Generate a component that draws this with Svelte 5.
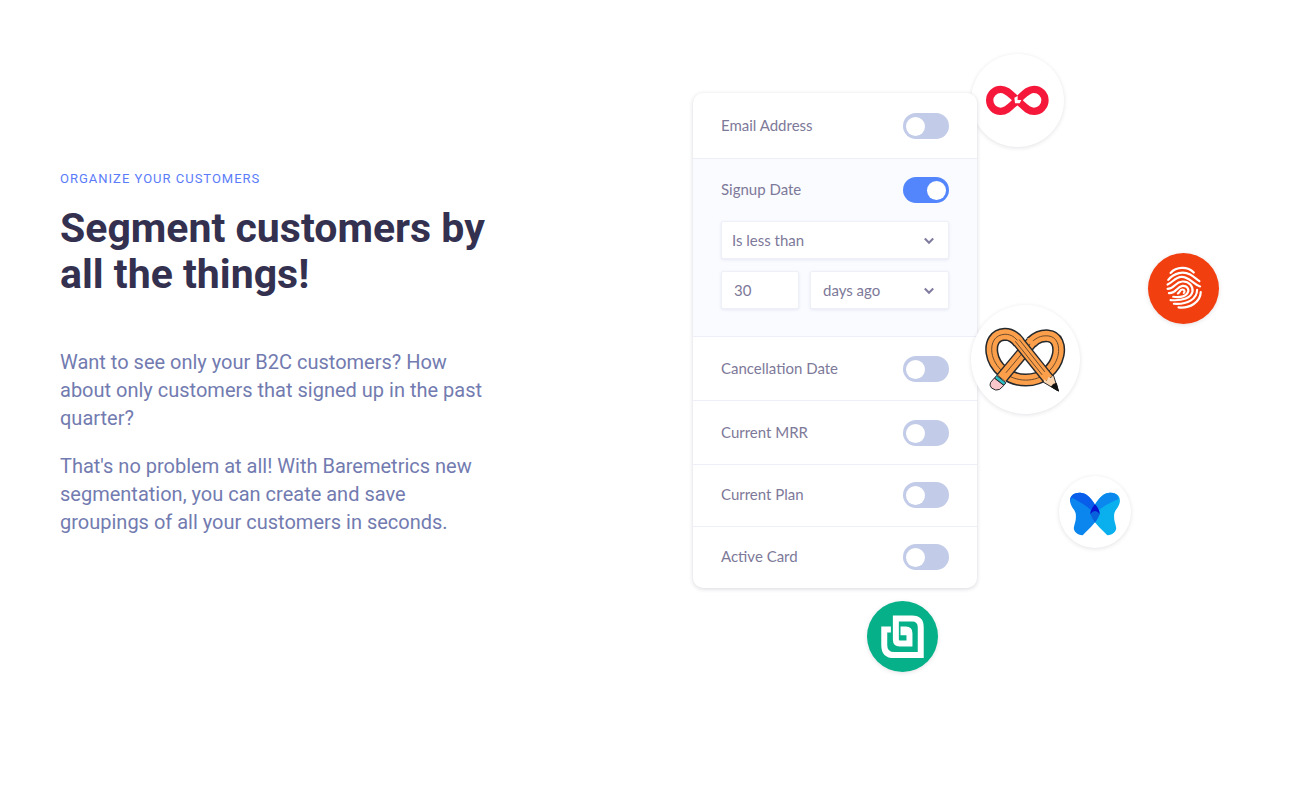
<script>
  let filters = $state([
    { id: 'email', label: 'Email Address', on: false, size: 'first' },
    { id: 'signup', label: 'Signup Date', on: true, size: 'open' },
    { id: 'cancel', label: 'Cancellation Date', on: false, size: 'regular' },
    { id: 'mrr', label: 'Current MRR', on: false, size: 'regular' },
    { id: 'plan', label: 'Current Plan', on: false, size: 'compact' },
    { id: 'card', label: 'Active Card', on: false, size: 'compact' }
  ]);
  let amount = $state('30');

  const loop =
    'M214 143C235 123 250 122 265 123C292 125 301 153 295 181C286 222 248 256 198 256C144 256 102 216 96 174C92 144 104 120 135 118C154 118 166 127 178 143';
</script>

{#snippet chevron()}
  <svg class="chevron" viewBox="0 0 12 8" aria-hidden="true">
    <path d="M1.8 1.6 6 5.8l4.2-4.2" fill="none" stroke="#807da0" stroke-width="2.1" />
  </svg>
{/snippet}

<section class="feature">
  <div class="copy">
    <p class="eyebrow">Organize your customers</p>
    <h2>Segment customers by all the things!</h2>
    <p>Want to see only your B2C customers? How about only customers that signed up in the past quarter?</p>
    <p>That's no problem at all! With Baremetrics new segmentation, you can create and save groupings of all your customers in seconds.</p>
  </div>

  <div class="art">
    <div class="logo infinity">
      <svg viewBox="34 41 279 279" aria-hidden="true">
        <path d="M173 180C153 197 143 213 123 213A33 33 0 0 1 123 147C143 147 153 163 173 180C193 197 203 213 223 213A33 33 0 0 0 223 147C203 147 193 163 173 180Z" fill="none" stroke="#f5183a" stroke-width="22" />
        <path d="M164 172l10-5v12h11l-5 10h-14z" fill="#fff" />
      </svg>
    </div>

    <form class="card">
      {#each filters as f (f.id)}
        <div class="row {f.size}">
          <div class="line">
            <label for={f.id}>{f.label}</label>
            <input class="toggle" type="checkbox" id={f.id} bind:checked={f.on} />
          </div>
          {#if f.size === 'open'}
            <div class="fields">
              <div class="picker wide">
                <select aria-label="Comparison">
                  <option>Is less than</option>
                </select>
                {@render chevron()}
              </div>
              <input class="amount" type="text" aria-label="Amount" bind:value={amount} />
              <div class="picker">
                <select aria-label="Unit">
                  <option>days ago</option>
                </select>
                {@render chevron()}
              </div>
            </div>
          {/if}
        </div>
      {/each}
    </form>

    <div class="logo fingerprint">
      <svg viewBox="39 38 214 214" aria-hidden="true">
        <g fill="none" stroke="#fff" stroke-width="6.5" stroke-linecap="round">
          <path d="M107 98C124 79 158 77 177 97" />
          <path d="M100 119C119 97 145 92 166 103C177 109 185 117 194 123" />
          <path d="M98 133C114 126 121 111 140 110C163 109 174 132 196 139" />
          <path d="M98 146C119 146 121 125 142 124C163 122 176 140 173 155C169 173 145 183 107 180" />
          <path d="M102 159C124 161 125 139 143 137C159 136 165 150 157 160C147 172 128 172 115 170" />
          <path d="M129 160C136 156 135 148 143 148C149 148 151 153 147 158" />
          <path d="M187 149C187 177 158 194 117 191" />
          <path d="M198 156C197 186 165 206 131 202" />
        </g>
      </svg>
    </div>

    <div class="logo pencil">
      <svg viewBox="33 30 328 328" aria-hidden="true">
        <g fill="none">
          <path d={loop} stroke="#24282c" stroke-width="39" />
          <path d={loop} stroke="#fb9f4b" stroke-width="30" />
          <path d={loop} stroke="#6b4a2c" stroke-width="3" />
          <path d="M126 249L215 142" stroke="#24282c" stroke-width="37" />
          <path d="M125 250L218 138" stroke="#fb9f4b" stroke-width="29" />
          <path d="M138 234L211 147" stroke="#6b4a2c" stroke-width="3" />
          <path d="M177 142L266 253" stroke="#24282c" stroke-width="37" />
          <path d="M173 137L266 253" stroke="#fb9f4b" stroke-width="29" />
          <path d="M178 134L255 231M166 139L247 240" stroke="#6b4a2c" stroke-width="3" />
        </g>
        <path d="M110 242L138 264L132 272L104 250Z" fill="#29bfc4" stroke="#24282c" stroke-width="3" />
        <path d="M103 250L132 272L119 284Q108 290 95 280Q87 271 92 263Z" fill="#f9c6cb" stroke="#24282c" stroke-width="3" />
        <path d="M252 264l1-10 8 5 5-12 9 4 5-9 17 47Z" fill="#f9d3ad" />
        <path d="M252 263L296 289L281 241" fill="none" stroke="#24282c" stroke-width="3" />
        <path d="M275 276l5-7 10-3 6 23Z" fill="#111" stroke="#111" stroke-width="3" />
      </svg>
    </div>

    <div class="logo butterfly">
      <svg viewBox="27 32 216 216" aria-hidden="true">
        <path d="M61 112C57 92 72 80 95 83C115 86 126 104 135 118C145 129 149 139 149 147C147 161 119 190 98 210C79 208 69 195 72 185C74 172 80 164 77 144C74 133 64 125 61 112Z" fill="#0a86ee" />
        <path d="M61 112C57 92 72 80 95 83C115 86 126 104 135 118L122 134C111 121 91 110 66 97Q60 104 61 112Z" fill="#085eea" />
        <path d="M209 112C213 92 198 80 175 83C155 86 144 104 135 118C125 129 121 139 121 147C123 161 151 190 172 210C191 208 201 195 198 185C196 172 190 164 193 144C196 133 206 125 209 112Z" fill="#0aafee" />
        <path d="M206 100C203 87 192 81 175 83C155 86 144 104 135 118L148 134C163 119 188 109 206 100Z" fill="#0a88ee" />
        <path d="M135 118C125 129 121 139 121 147Q124 157 135 172Q146 157 149 147C149 139 145 129 135 118Z" fill="#0762dc" />
        <path d="M135 117C126 127 121 137 121 146Q128 137 135 137Q142 137 149 146C149 137 144 127 135 117Z" fill="#0713ce" />
      </svg>
    </div>

    <div class="logo spiral">
      <svg viewBox="35 31 214 214" aria-hidden="true">
        <path d="M107 117H87V164Q87 194 117 194H197V110Q197 84 171 84H122V147Q122 159 134 159H163V128Q163 117 152 117H136M145 112V134" fill="none" stroke="#fff" stroke-width="18" />
      </svg>
    </div>
  </div>
</section>

<style>
  :global(body) {
    margin: 0;
    background: #fff;
  }

  .feature {
    display: grid;
    grid-template-columns: 1fr 1fr;
    align-items: center;
    padding: 33px 60px;
    font-family: Roboto, "Liberation Sans", sans-serif;
    font-size: 20px;
    line-height: 28px;
    color: #727bb0;
  }

  .copy {
    max-width: 434px;
  }

  .copy p {
    margin: 0 0 20px;
  }

  .copy p:last-child {
    margin-bottom: 0;
  }

  .copy .eyebrow {
    margin: 0 0 16px;
    font-size: 13px;
    line-height: 20px;
    letter-spacing: 1px;
    text-transform: uppercase;
    color: #5b7cfa;
  }

  h2 {
    margin: 0 0 51px;
    font-size: 41px;
    line-height: 46px;
    font-weight: 700;
    color: #33314f;
  }

  .art {
    position: relative;
    padding: 60px 0 84px 45px;
    font-family: Lato, "Liberation Sans", sans-serif;
  }

  .card {
    position: relative;
    width: 284px;
    border-radius: 10px;
    background: #fff;
    box-shadow: 0 1px 4px rgba(40, 40, 70, 0.18);
    overflow: hidden;
    font-size: 15px;
    line-height: 20px;
    color: #7d7999;
  }

  .row {
    padding: 19px 28px 18px;
    border-top: 1px solid #eceef8;
  }

  .row.first {
    padding-bottom: 19px;
    border-top-color: transparent;
  }

  .row.open {
    padding: 18px 28px 27px;
    background: #fafbff;
  }

  .row.compact {
    padding: 17px 28px 18px;
  }

  .line {
    display: flex;
    align-items: center;
    justify-content: space-between;
  }

  label {
    padding-bottom: 3px;
  }

  .toggle {
    appearance: none;
    display: flex;
    align-items: center;
    box-sizing: border-box;
    width: 46px;
    height: 26px;
    margin: 0;
    padding: 0 3px;
    border-radius: 13px;
    background: #c2cbe7;
  }

  .toggle::before {
    content: "";
    width: 19px;
    height: 19px;
    border-radius: 50%;
    background: #fff;
  }

  .toggle:checked {
    justify-content: flex-end;
    background: #5386fd;
  }

  .fields {
    display: grid;
    grid-template-columns: 78px 1fr;
    gap: 12px 11px;
    margin-top: 18px;
  }

  .picker {
    position: relative;
  }

  .wide {
    grid-column: 1 / -1;
  }

  select,
  .amount {
    appearance: none;
    display: block;
    box-sizing: border-box;
    width: 100%;
    height: 38px;
    margin: 0;
    padding: 0 12px;
    border: 1px solid #eef0f8;
    border-radius: 2px;
    background: #fff;
    box-shadow: 0 1px 3px rgba(90, 100, 160, 0.12);
    font: inherit;
    color: inherit;
  }

  .wide select {
    padding-left: 10px;
  }

  .chevron {
    position: absolute;
    top: 16px;
    right: 14px;
    width: 12px;
    height: 8px;
    pointer-events: none;
  }

  .logo {
    position: absolute;
    border-radius: 50%;
    background: #fff;
    box-shadow: 0 1px 4px rgba(40, 40, 70, 0.13);
  }

  .logo svg {
    display: block;
    width: 100%;
    height: 100%;
  }

  .infinity {
    left: 323px;
    top: 21px;
    width: 93px;
    height: 93px;
  }

  .fingerprint {
    left: 500px;
    top: 220px;
    width: 71px;
    height: 71px;
    background: #f23f10;
  }

  .pencil {
    left: 323px;
    top: 272px;
    width: 109px;
    height: 109px;
  }

  .butterfly {
    left: 411px;
    top: 443px;
    width: 72px;
    height: 72px;
  }

  .spiral {
    left: 219px;
    top: 568px;
    width: 71px;
    height: 71px;
    background: #06b189;
  }
</style>
